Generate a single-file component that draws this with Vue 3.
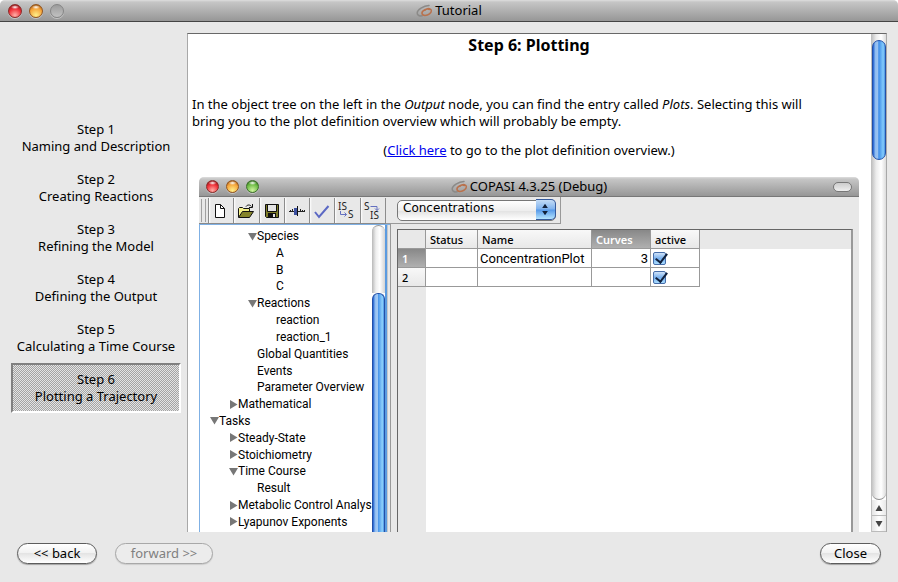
<script setup>
import { ref } from 'vue'

const steps = [
  ['Step 1', 'Naming and Description'],
  ['Step 2', 'Creating Reactions'],
  ['Step 3', 'Refining the Model'],
  ['Step 4', 'Defining the Output'],
  ['Step 5', 'Calculating a Time Course'],
  ['Step 6', 'Plotting a Trajectory'],
]
const current = ref(5)

const tree = [
  { label: 'Species', level: 2, state: 'open' },
  { label: 'A', level: 3 },
  { label: 'B', level: 3 },
  { label: 'C', level: 3 },
  { label: 'Reactions', level: 2, state: 'open' },
  { label: 'reaction', level: 3 },
  { label: 'reaction_1', level: 3 },
  { label: 'Global Quantities', level: 2 },
  { label: 'Events', level: 2 },
  { label: 'Parameter Overview', level: 2 },
  { label: 'Mathematical', level: 1, state: 'closed' },
  { label: 'Tasks', level: 0, state: 'open' },
  { label: 'Steady-State', level: 1, state: 'closed' },
  { label: 'Stoichiometry', level: 1, state: 'closed' },
  { label: 'Time Course', level: 1, state: 'open' },
  { label: 'Result', level: 2 },
  { label: 'Metabolic Control Analys', level: 1, state: 'closed' },
  { label: 'Lyapunov Exponents', level: 1, state: 'closed' },
]

const plots = ref([
  { id: 1, status: '', name: 'ConcentrationPlot', curves: '3', active: true },
  { id: 2, status: '', name: '', curves: '', active: true },
])
</script>

<template>
  <div class="window">
    <header class="titlebar">
      <div class="lights">
        <button class="light red" aria-label="Close window"></button>
        <button class="light amber" aria-label="Minimize window"></button>
        <button class="light off" aria-label="Zoom window" disabled></button>
      </div>
      <div class="title">
        <svg class="logo" viewBox="0 0 17 14" fill="none" stroke-linecap="round">
          <path d="M13 1.500C7.500 1.800 1.200 5.500 1.200 9c0 2.400 2.500 3.300 5 2.800" stroke="#8b8a88" stroke-width="1.500" />
          <path d="M13.500 5.500c-3-1.300-8 1.300-7.500 4 .5 2.600 5 2.300 7.500.3 2.400-2 2.600-4.600 0-5.100-1.600-.3-3.300.3-4.500 1.500" stroke="#b9714c" stroke-width="1.500" />
        </svg>
        <span>Tutorial</span>
      </div>
    </header>

    <main class="main">
      <nav class="steps">
        <button
          v-for="(step, i) in steps"
          :key="step[0]"
          class="step"
          :class="{ current: i === current }"
          @click="current = i"
        >
          <span>{{ step[0] }}</span>
          <span>{{ step[1] }}</span>
        </button>
      </nav>

      <section class="viewer">
        <article class="page">
          <h1>Step 6: Plotting</h1>
          <p class="intro">
            In the object tree on the left in the <em>Output</em> node, you can find the entry called
            <em>Plots</em>. Selecting this will bring you to the plot definition overview which will
            probably be empty.
          </p>
          <p class="jump">(<a href="#plots">Click here</a> to go to the plot definition overview.)</p>

          <div class="copasi">
            <div class="titlebar small">
              <div class="lights">
                <span class="light red"></span>
                <span class="light amber"></span>
                <span class="light green"></span>
              </div>
              <div class="title">
                <svg class="logo" viewBox="0 0 17 14" fill="none" stroke-linecap="round">
                  <path d="M13 1.500C7.500 1.800 1.200 5.500 1.200 9c0 2.400 2.500 3.300 5 2.800" stroke="#8b8a88" stroke-width="1.500" />
                  <path d="M13.500 5.500c-3-1.300-8 1.300-7.500 4 .5 2.600 5 2.300 7.500.3 2.400-2 2.600-4.600 0-5.100-1.600-.3-3.300.3-4.500 1.500" stroke="#b9714c" stroke-width="1.500" />
                </svg>
                <span>COPASI 4.3.25 (Debug)</span>
              </div>
              <span class="pill"></span>
            </div>

            <div class="bars">
              <div class="toolbar">
                <span class="grip"></span>
                <button class="tool" aria-label="New">
                  <svg viewBox="0 0 24 24"><path d="M6.500 5.500h5l4 4v9h-9z" fill="#fff" stroke="#111" /><path d="M11.500 5.500v4h4" fill="none" stroke="#111" /></svg>
                </button>
                <button class="tool" aria-label="Open">
                  <svg viewBox="0 0 24 24">
                    <path d="M4.500 18V9.500l1-1h3l1 1h6V12" fill="#f4f08a" stroke="#111" />
                    <path d="M4.500 18.500l4-6h11l-4 6z" fill="#85842a" stroke="#111" />
                    <path d="M12 7.500c1.500-2 4-2 5.500 0M18.500 5v3.500H15" fill="none" stroke="#111" />
                  </svg>
                </button>
                <button class="tool" aria-label="Save">
                  <svg viewBox="0 0 24 24">
                    <path d="M5.500 5.500h13v13h-12l-1-1z" fill="#7d7c28" stroke="#111" />
                    <path d="M8 6h8v6H8z" fill="#e4e4e4" /><path d="M7.500 6v6.500h9V6" fill="none" stroke="#111" />
                    <path d="M8 14h8v5H8z" fill="#111" /><path d="M13 15h2v3h-2z" fill="#e4e4e4" />
                  </svg>
                </button>
                <button class="tool" aria-label="Slider">
                  <svg viewBox="0 0 24 24">
                    <path d="M4 12.500h16M5.500 11v2M7.500 10v3M15.500 10v3M17.500 11v2M19.500 11v2" fill="none" stroke="#222" />
                    <path d="M9 9h3v7H9z" fill="#3c50a0" /><path d="M12.500 7v10" stroke="#111" />
                  </svg>
                </button>
                <button class="tool" aria-label="Check">
                  <svg viewBox="0 0 24 24"><path d="M5 13l4 5L18.500 7" fill="none" stroke="#5c69c4" stroke-width="2" /></svg>
                </button>
                <button class="tool" aria-label="Initial state to state">
                  <svg viewBox="0 0 24 24">
                    <text x="3" y="11">IS</text><text x="13" y="19">S</text>
                    <path d="M5.500 12v3.500h6M9.500 13.500l2 2-2 2" fill="none" stroke="#6470c0" />
                  </svg>
                </button>
                <button class="tool" aria-label="State to initial state">
                  <svg viewBox="0 0 24 24">
                    <text x="3" y="11">S</text><text x="9" y="20">IS</text>
                    <path d="M9.500 7.500h6.500v4M14 9.500l2 2 2-2" fill="none" stroke="#6470c0" />
                  </svg>
                </button>
              </div>
              <div class="chooser">
                <div class="combo">
                  <select aria-label="Units view">
                    <option>Concentrations</option>
                    <option>Particle Numbers</option>
                  </select>
                  <span class="combo-arrows">
                    <svg viewBox="0 0 20 20"><path d="M9.500 4L12.500 8.500h-6zM9.500 16l3-4.500h-6z" fill="#12213a" /></svg>
                  </span>
                </div>
              </div>
            </div>

            <div class="panes">
              <div class="tree-pane">
                <ul class="tree">
                  <li v-for="node in tree" :key="node.label" :class="'level-' + node.level">
                    <svg class="disclosure" viewBox="0 0 9 9">
                      <path v-if="node.state === 'open'" d="M0 1h9L4.500 8.500z" fill="#777" />
                      <path v-else-if="node.state === 'closed'" d="M1 0v9l7.500-4.500z" fill="#777" />
                    </svg>
                    <span>{{ node.label }}</span>
                  </li>
                </ul>
                <div class="tree-scroll">
                  <span class="tree-track"></span>
                  <span class="tree-thumb"></span>
                </div>
              </div>

              <div class="plot-pane">
                <div class="sheet">
                  <table>
                    <colgroup>
                      <col class="c-id" /><col class="c-status" /><col class="c-name" /><col class="c-curves" /><col class="c-active" />
                    </colgroup>
                    <thead>
                      <tr>
                        <td class="corner"></td>
                        <th scope="col">Status</th>
                        <th scope="col">Name</th>
                        <th scope="col" class="picked">Curves</th>
                        <th scope="col">active</th>
                      </tr>
                    </thead>
                    <tbody>
                      <tr v-for="plot in plots" :key="plot.id">
                        <th scope="row" :class="{ picked: plot.id === 1 }">{{ plot.id }}</th>
                        <td>{{ plot.status }}</td>
                        <td>{{ plot.name }}</td>
                        <td class="num">{{ plot.curves }}</td>
                        <td class="tick">
                          <input v-model="plot.active" type="checkbox" :aria-label="'Plot ' + plot.id + ' active'" />
                        </td>
                      </tr>
                    </tbody>
                  </table>
                </div>
              </div>
            </div>
          </div>
        </article>

        <div class="scrollbar">
          <div class="track"><span class="thumb"></span></div>
          <button class="arrow" aria-label="Scroll up"><svg viewBox="0 0 8 8"><path d="M4 1l3.500 6h-7z" fill="#444" /></svg></button>
          <button class="arrow" aria-label="Scroll down"><svg viewBox="0 0 8 8"><path d="M4 7L.5 1h7z" fill="#444" /></svg></button>
        </div>
      </section>
    </main>

    <footer class="footer">
      <button class="aqua back">&lt;&lt; back</button>
      <button class="aqua forward" disabled>forward &gt;&gt;</button>
      <button class="aqua close">Close</button>
    </footer>
  </div>
</template>

<style>
body {
  background: #fff;
}
</style>

<style scoped>
* {
  box-sizing: border-box;
}
.window {
  display: flex;
  flex-direction: column;
  height: 100vh;
  background: #e8e8e8;
  border-radius: 5px 5px 0 0;
  overflow: hidden;
  font: 13px/17px "Noto Sans", "Open Sans", sans-serif;
  color: #000;
}
button {
  font: inherit;
  color: inherit;
  margin: 0;
  padding: 0;
  border: 0;
  background: none;
}

/* title bars */
.titlebar {
  flex: none;
  display: grid;
  grid-template-columns: 1fr auto 1fr;
  align-items: center;
  height: 22px;
  padding: 0 8px;
  background: linear-gradient(#dedede, #c6c6c6 2px, #969696);
  border-bottom: 1px solid #444;
}
.lights {
  display: flex;
  gap: 7px;
}
.light {
  width: 14px;
  height: 14px;
  border-radius: 50%;
  box-shadow: 0 1px 0 rgba(255, 255, 255, 0.4);
}
.red {
  background: radial-gradient(ellipse 4px 2px at 50% 18%, #fff, transparent),
    radial-gradient(circle at 50% 85%, #ffb0a8, #f03038 55%, #70100f);
  border: 1px solid #8a2a28;
}
.amber {
  background: radial-gradient(ellipse 4px 2px at 50% 18%, #fff, transparent),
    radial-gradient(circle at 50% 85%, #fff08a, #f5a238 60%, #7c3a08);
  border: 1px solid #92551f;
}
.green {
  background: radial-gradient(ellipse 4px 2px at 50% 18%, #fff, transparent),
    radial-gradient(circle at 50% 85%, #d0f5a0, #68b840 60%, #1c500e);
  border: 1px solid #3c6f2a;
}
.off {
  background: linear-gradient(#9c9c9c, #c2c2c2);
  border: 1px solid #858585;
}
.title {
  display: flex;
  align-items: center;
  gap: 2px;
  white-space: nowrap;
}
.logo {
  width: 17px;
  height: 14px;
}

/* main split */
.main {
  flex: 1;
  display: flex;
  min-height: 0;
  padding: 11px 11px 0;
}
.steps {
  flex: none;
  width: 170px;
  margin-right: 6px;
  padding-top: 80px;
}
.step {
  display: flex;
  flex-direction: column;
  justify-content: center;
  align-items: center;
  width: 100%;
  height: 50px;
  border: 2px solid transparent;
  white-space: nowrap;
}
.step.current {
  border-color: #808080 #fff #fff #808080;
  background: repeating-conic-gradient(#a4a4a4 0 25%, #e4e4e4 0 50%) 0 0 / 2px 2px;
}
.viewer {
  flex: 1;
  display: flex;
  min-width: 0;
  background: #fff;
  border: 1px solid #a8a8a8;
  border-top-color: #686868;
  border-bottom: 0;
}
.page {
  flex: 1;
  display: flex;
  flex-direction: column;
  min-width: 0;
  overflow: hidden;
  padding: 3px 12px 0 11px;
}
h1 {
  margin: 0 0 42px;
  font-size: 16px;
  line-height: 17px;
  text-align: center;
}
.intro {
  margin: 0 0 12px -7px;
  padding-right: 24px;
}
.jump {
  margin: 0 0 18px;
  text-align: center;
}
.jump a {
  color: #0000ee;
}

/* embedded application window */
.copasi {
  flex: 1;
  display: flex;
  flex-direction: column;
  min-height: 0;
  background: #e8e8e8;
  border-radius: 5px 5px 0 0;
  overflow: hidden;
}
.small {
  height: 20px;
  padding: 0 7px;
  border-bottom-color: #777;
}
.small .light {
  width: 13px;
  height: 13px;
}
.pill {
  justify-self: end;
  width: 19px;
  height: 10px;
  border: 1px solid #777;
  border-radius: 5px;
  background: linear-gradient(#ccc, #eee);
}
.bars {
  flex: none;
  display: flex;
  height: 27px;
}
.toolbar {
  display: flex;
  width: 187px;
  padding-top: 1px;
  border-bottom: 1px solid #8a8a8a;
}
.grip {
  width: 5px;
  margin: 1px 2px;
  border: solid #a0a0a0;
  border-width: 0 1px;
}
.tool {
  flex: 1;
  border: solid #8c8c8c;
  border-width: 0 1px 0 0;
  background: linear-gradient(90deg, #fff, #e8e8e8 2px);
}
.tool:nth-of-type(1) {
  border-left-width: 1px;
}
.tool svg {
  display: block;
  width: 24px;
  height: 24px;
}
.tool text {
  font: 10px "Noto Sans", sans-serif;
  fill: #222;
}
.chooser {
  width: 175px;
  padding: 2px 4px 0 11px;
  border: solid #999;
  border-width: 0 1px 1px 0;
}
.combo {
  position: relative;
  height: 21px;
}
select {
  appearance: none;
  width: 100%;
  height: 21px;
  margin: 0;
  padding: 0 24px 4px 5px;
  border: 1px solid #777;
  border-radius: 5px;
  background: linear-gradient(#fff, #eee 50%, #e2e2e2 52%, #fff);
  font: 12px/15px "DejaVu Sans", sans-serif;
  color: #000;
}
.combo-arrows {
  position: absolute;
  inset: 0 0 0 auto;
  width: 20px;
  border: 1px solid #34599c;
  border-left: 0;
  border-radius: 0 5px 5px 0;
  background: linear-gradient(#c4dcf6, #7fb2ee 48%, #5598e8 52%, #b4e4ff);
  pointer-events: none;
}
.combo-arrows svg {
  display: block;
  width: 100%;
  height: 100%;
}
.panes {
  flex: 1;
  display: flex;
  min-height: 0;
}
.tree-pane {
  flex: none;
  display: flex;
  width: 191px;
  background: linear-gradient(90deg, #fff 185px, #5b9be0 0 187px, #c4c8cc 0 188px, #e8e8e8 0);
  border: solid #7fb0e4;
  border-width: 1px 0 0 1px;
}
.tree {
  flex: none;
  display: flex;
  flex-direction: column;
  justify-content: space-between;
  width: 172px;
  margin: 0;
  padding: 3px 0 2px;
  overflow: hidden;
  list-style: none;
  font-family: Roboto, "Noto Sans", sans-serif;
  font-size: 12px;
}
.tree li {
  display: flex;
  align-items: center;
  height: 16px;
  line-height: 16px;
  white-space: nowrap;
}
.disclosure {
  flex: none;
  width: 9px;
  height: 9px;
}
.level-0 {
  padding-left: 10px;
}
.level-1 {
  padding-left: 29px;
}
.level-2 {
  padding-left: 48px;
}
.level-3 {
  padding-left: 67px;
}
.tree-scroll {
  display: flex;
  flex-direction: column;
  width: 13px;
}
.tree-track {
  height: 68px;
  border-top: 1px solid #999;
  border-radius: 7px 7px 0 0;
  background: linear-gradient(90deg, #b8b8b8, #eee 30%, #fff 60%, #d4d4d4);
}
.tree-thumb {
  flex: 1;
  border: 1px solid #2350a8;
  border-bottom: 0;
  border-radius: 6px 6px 0 0;
  background: linear-gradient(90deg, #1b5cd0, #8fbcf0 20%, #a8cdf5 40%, #4c97ea 50%, #8fd2fc 85%, #4a92e0);
}
.plot-pane {
  flex: 1;
  display: flex;
  min-width: 0;
  padding: 5px 6px 0;
  border-left: 1px solid #999;
}
.sheet {
  flex: 1;
  overflow: hidden;
  border: solid #666;
  border-width: 1px 2px 0 1px;
  border-right-color: #999;
  background: linear-gradient(#e8e8e8, #e8e8e8) 0 0 / 28px 100% no-repeat,
    linear-gradient(#e8e8e8, #e8e8e8) 0 0 / 100% 19px no-repeat, #fff;
}
table {
  table-layout: fixed;
  width: 302px;
  border-collapse: separate;
  border-spacing: 0;
}
.c-id {
  width: 28px;
}
.c-status {
  width: 52px;
}
.c-name {
  width: 114px;
}
.c-curves {
  width: 59px;
}
.c-active {
  width: 49px;
}
th,
td {
  height: 19px;
  padding: 0 2px;
  border: solid #999;
  border-width: 0 1px 1px 0;
  font-family: Roboto, "Noto Sans", sans-serif;
  font-size: 13px;
  line-height: 17px;
  white-space: nowrap;
}
th {
  padding: 0 4px;
  text-align: left;
  font-family: "Noto Sans", sans-serif;
  font-size: 11px;
  font-weight: 500;
  background: linear-gradient(#f8f8f8, #e8e8e8);
}
th.picked {
  color: #fff;
  font-weight: 600;
  background: linear-gradient(#888, #b0b0b0);
}
.corner {
  background: #e8e8e8;
}
.num {
  text-align: right;
}
.tick input {
  appearance: none;
  display: block;
  position: relative;
  width: 13px;
  height: 13px;
  margin: 0;
  border: 1px solid #456ca8;
  border-radius: 2px;
  background: linear-gradient(#cfe2f8, #78b0ee 50%, #a8dcff);
}
.tick input:checked::after {
  content: "";
  position: absolute;
  left: 4px;
  top: -2px;
  width: 5px;
  height: 10px;
  border: solid #10203c;
  border-width: 0 2px 2px 0;
  transform: rotate(38deg);
}

/* viewer scrollbar */
.scrollbar {
  flex: none;
  display: flex;
  flex-direction: column;
  width: 15px;
  border-left: 1px solid #c0c0c0;
}
.track {
  flex: 1;
  padding-top: 6px;
  border-radius: 0 0 7px 7px;
  border-bottom: 1px solid #8a8a8a;
  background: linear-gradient(90deg, #c4c4c4, #ececec 30%, #fff 65%, #dcdcdc);
}
.thumb {
  display: block;
  height: 120px;
  border: 1px solid #2350a8;
  border-radius: 7px;
  background: linear-gradient(90deg, #1b5cd0, #8fbcf0 20%, #9cc4f2 40%, #3f8de8 48%, #84ccfc 85%, #4a92e0);
}
.arrow {
  display: grid;
  place-items: center;
  height: 16px;
  border-bottom: 1px solid #bbb;
  background: linear-gradient(90deg, #e4e4e4, #fff, #e8e8e8);
}
.arrow svg {
  width: 8px;
  height: 8px;
}

/* footer */
.footer {
  flex: none;
  display: flex;
  gap: 18px;
  height: 50px;
  padding: 11px 17px 0;
}
.aqua {
  height: 21px;
  border: 1px solid #5c5c5c;
  border-radius: 11px;
  background: linear-gradient(#fff, #f2f2f2 45%, #e4e4e4 50%, #fff);
  box-shadow: 0 1px 1px rgba(0, 0, 0, 0.3);
  line-height: 17px;
}
.back {
  width: 80px;
}
.forward {
  width: 98px;
  border-color: #a8a8a8;
  color: #808080;
  background: #ececec;
  box-shadow: 0 1px 1px rgba(0, 0, 0, 0.12);
}
.close {
  width: 61px;
  margin-left: auto;
}
</style>
